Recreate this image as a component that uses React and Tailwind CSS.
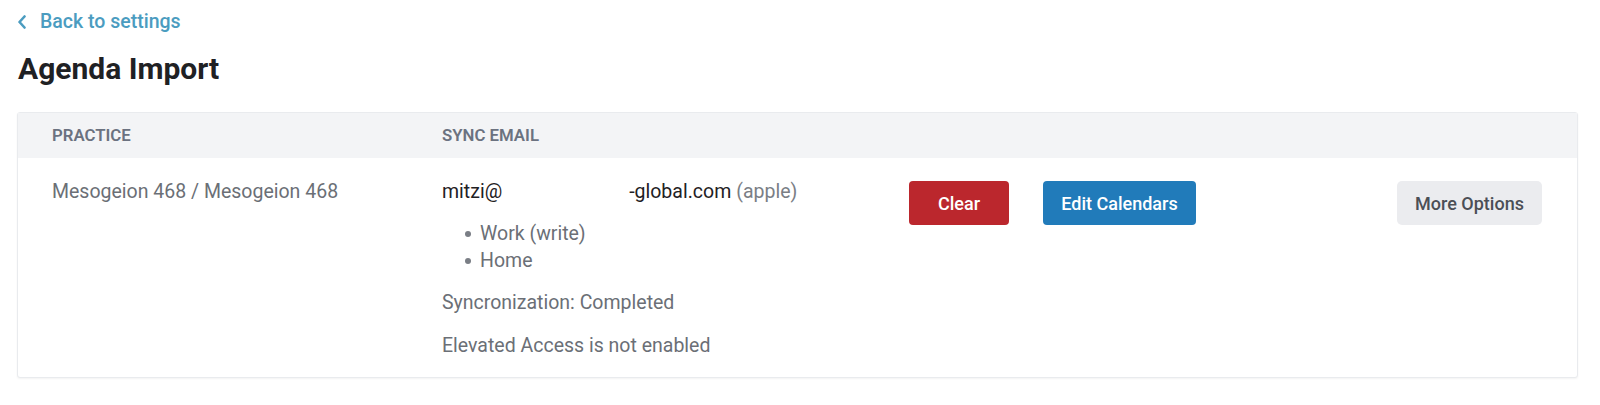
import React from "react";

const Chevron = () => (
  <svg width="10" height="14" viewBox="0 0 10 14" fill="none">
    <path
      d="M7.5 1.5L2.5 7l5 5.5"
      stroke="currentColor"
      strokeWidth="2.6"
      strokeLinecap="round"
      strokeLinejoin="round"
    />
  </svg>
);

const calendars = ["Work (write)", "Home"];

export default function App() {
  return (
    <div
      className="min-h-screen bg-white pl-[17px] pr-[22px] pt-[10px]"
      style={{ fontFamily: "Roboto, 'Liberation Sans', sans-serif" }}
    >
      <a
        href="#"
        className="flex items-center gap-[13px] text-[19.5px] leading-[24px] font-medium text-[#4b9cc0]"
      >
        <Chevron />
        <span>Back to settings</span>
      </a>

      <h1 className="mt-[18px] pl-[1px] text-[30px] leading-[34px] font-bold text-[#1f2124]">
        Agenda Import
      </h1>

      <div className="mt-[26px] rounded-[3px] border border-[#e9ebee] bg-white shadow-[0_1px_2px_rgba(0,0,0,0.05)]">
        <div className="flex h-[45px] items-center bg-[#f3f4f6] text-[16.8px] font-semibold uppercase text-[#6b7280]">
          <div className="w-[424px] pl-[34px]">Practice</div>
          <div>Sync Email</div>
        </div>

        <div className="flex items-start pb-[18px] pt-[20px] pr-[35px] text-[19.5px] leading-[27px]">
          <div className="w-[424px] pl-[34px] text-[#6b6f76]">
            Mesogeion 468 / Mesogeion 468
          </div>

          <div className="w-[467px]">
            <div className="flex text-[#1f2124]">
              <span>mitzi@</span>
              <span className="w-[127px]" />
              <span>-global.com</span>
              <span className="ml-[5px] text-[#7a7e85]">(apple)</span>
            </div>
            <ul className="mt-[15px] pl-[23px] text-[#6b6f76]">
              {calendars.map((c) => (
                <li key={c} className="flex items-center gap-[9px]">
                  <span className="h-[6px] w-[6px] rounded-full bg-[#7a7e85]" />
                  {c}
                </li>
              ))}
            </ul>
            <p className="mt-[15px] text-[#6b6f76]">Syncronization: Completed</p>
            <p className="mt-[16px] text-[#6b6f76]">Elevated Access is not enabled</p>
          </div>

          <div className="mt-[3px] flex items-center gap-[34px]">
            <button className="h-[44px] w-[100px] rounded-[4px] bg-[#bb272d] text-[18px] font-medium text-white">
              Clear
            </button>
            <button className="h-[44px] w-[153px] rounded-[4px] bg-[#217bba] text-[18px] font-medium text-white">
              Edit Calendars
            </button>
          </div>

          <div className="flex-1" />

          <button className="mt-[3px] h-[44px] w-[145px] rounded-[5px] bg-[#ebecef] text-[18px] font-medium text-[#4b4f56]">
            More Options
          </button>
        </div>
      </div>
    </div>
  );
}
